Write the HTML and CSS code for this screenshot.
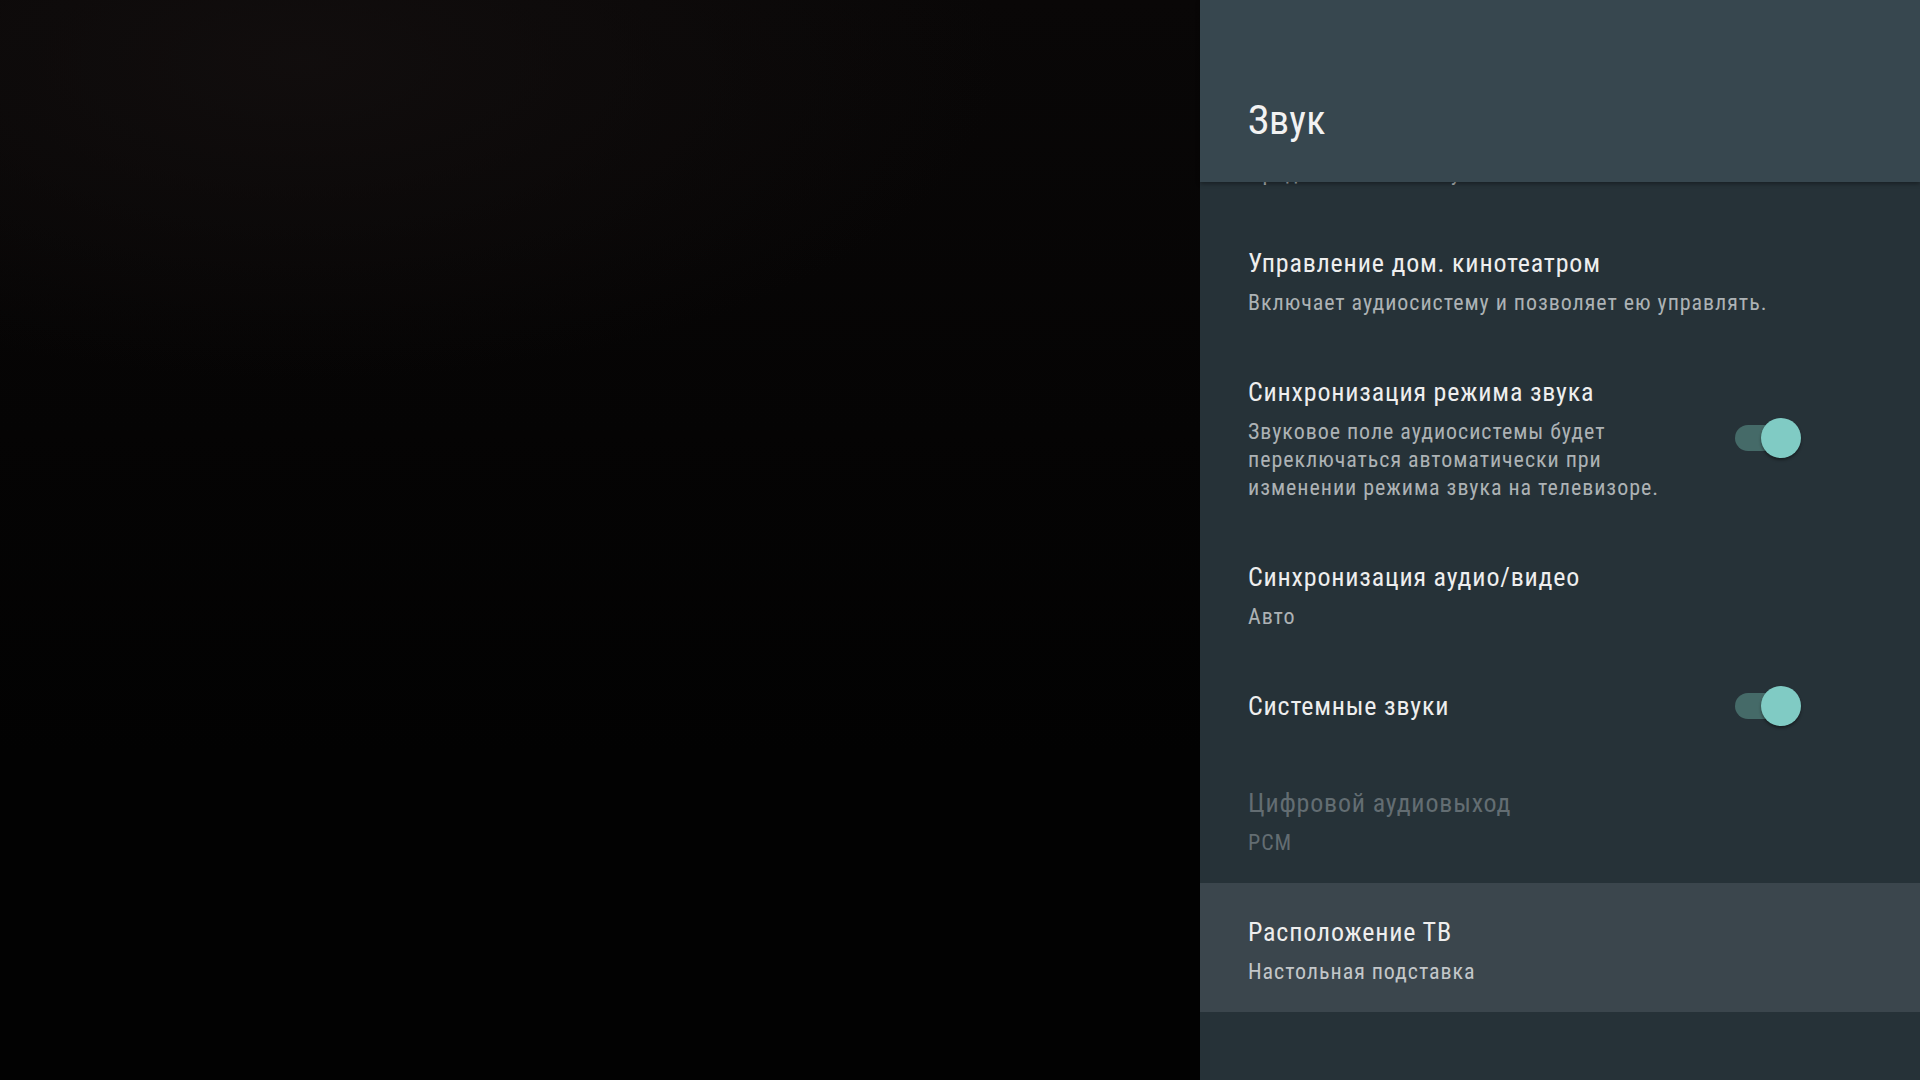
FILE: index.html
```html
<!DOCTYPE html>
<html lang="ru">
<head>
<meta charset="utf-8">
<title>Звук</title>
<link rel="stylesheet" href="styles.css">
</head>
<body>
<div class="screen">
  <div class="backdrop"></div>
  <aside class="panel">
    <header class="panel-header">
      <h1 class="panel-title">Звук</h1>
    </header>
    <div class="list">
      <div class="item item-hidden">
        <div class="item-text">
          <div class="item-title">Режим звука</div>
          <div class="item-summary">Предпочитаемый звук</div>
        </div>
      </div>
      <div class="item">
        <div class="item-text">
          <div class="item-title">Управление дом. кинотеатром</div>
          <div class="item-summary">Включает аудиосистему и позволяет ею управлять.</div>
        </div>
      </div>
      <div class="item">
        <div class="item-text">
          <div class="item-title">Синхронизация режима звука</div>
          <div class="item-summary">Звуковое поле аудиосистемы будет<br>переключаться автоматически при<br>изменении режима звука на телевизоре.</div>
        </div>
        <div class="switch on"><span class="switch-track"></span><span class="switch-thumb"></span></div>
      </div>
      <div class="item">
        <div class="item-text">
          <div class="item-title">Синхронизация аудио/видео</div>
          <div class="item-summary">Авто</div>
        </div>
      </div>
      <div class="item item-single">
        <div class="item-text">
          <div class="item-title">Системные звуки</div>
        </div>
        <div class="switch on"><span class="switch-track"></span><span class="switch-thumb"></span></div>
      </div>
      <div class="item item-disabled">
        <div class="item-text">
          <div class="item-title">Цифровой аудиовыход</div>
          <div class="item-summary">PCM</div>
        </div>
      </div>
      <div class="item item-focused">
        <div class="item-text">
          <div class="item-title">Расположение ТВ</div>
          <div class="item-summary">Настольная подставка</div>
        </div>
      </div>
    </div>
  </aside>
</div>
</body>
</html>
```

FILE: styles.css
```css
* { box-sizing: border-box; }

html, body {
  margin: 0;
  padding: 0;
  width: 1920px;
  height: 1080px;
  overflow: hidden;
  background: #000;
}

body {
  font-family: "Roboto", "Noto Sans", sans-serif;
  font-stretch: condensed;
}

.screen {
  display: flex;
  width: 1920px;
  height: 1080px;
}

.backdrop {
  flex: 1;
  background:
    radial-gradient(ellipse 700px 320px at 300px 60px, rgba(18,14,14,0.9), rgba(0,0,0,0) 100%),
    linear-gradient(180deg, #090707 0%, #050404 40%, #020202 70%, #020202 100%);
}

.panel {
  width: 720px;
  height: 1080px;
  background: #263238;
  display: flex;
  flex-direction: column;
}

.panel-header {
  height: 182px;
  flex: 0 0 182px;
  background: #37474f;
  padding: 97px 0 0 48px;
  position: relative;
  z-index: 1;
  box-shadow: 0 2px 4px rgba(0,0,0,0.35);
}

.panel-title {
  margin: 0;
  font-size: 40px;
  line-height: 48px;
  font-weight: 400;
  color: #f2f2f2;
  letter-spacing: 0.3px;
}

.list {
  flex: 1;
  overflow: hidden;
}

.item {
  display: flex;
  align-items: center;
  padding: 31px 119px 26px 48px;
}

.item-hidden {
  margin-top: -98px;
  padding-bottom: 27px;
}

.item-text {
  flex: 1;
  min-width: 0;
}

.item-title {
  font-size: 26px;
  line-height: 36px;
  color: #eeeeee;
  white-space: nowrap;
  letter-spacing: 0.8px;
}

.item-summary {
  margin-top: 8px;
  font-size: 22px;
  line-height: 28px;
  color: #adb2b5;
  letter-spacing: 0.95px;
}

.item-single {
  min-height: 97px;
  padding-top: 0;
  padding-bottom: 0;
}

.item-disabled .item-title,
.item-disabled .item-summary {
  color: #636d72;
}

.item-focused {
  background: #3b464d;
}

.item-focused .item-summary {
  color: #c3c7c9;
}

.switch {
  position: relative;
  width: 66px;
  height: 40px;
  flex: 0 0 66px;
}

.switch-track {
  position: absolute;
  left: 0;
  top: 7px;
  width: 56px;
  height: 26px;
  border-radius: 13px;
  background: #456a68;
}

.switch-thumb {
  position: absolute;
  right: 0;
  top: 0;
  width: 40px;
  height: 40px;
  border-radius: 50%;
  background: #80cbc4;
  box-shadow: 0 2px 3px rgba(0,0,0,0.4);
}
```
